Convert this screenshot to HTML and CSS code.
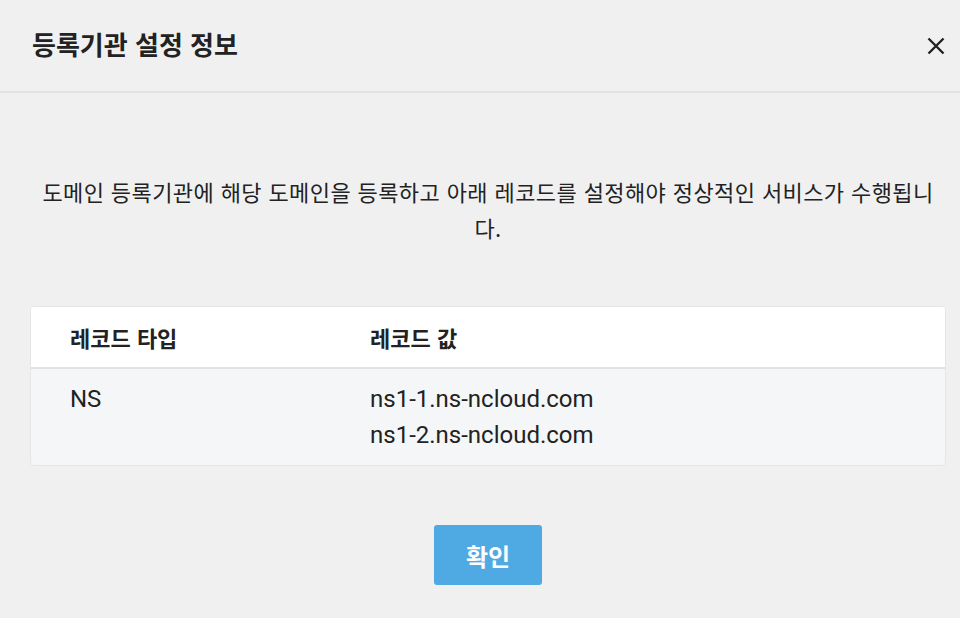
FILE: index.html
```html
<!DOCTYPE html>
<html lang="ko">
<head>
<meta charset="utf-8">
<link rel="stylesheet" href="styles.css">
</head>
<body>
<div class="modal">
  <header class="modal-header">
    <h1 class="modal-title">등록기관 설정 정보</h1>
    <button class="close" aria-label="닫기">
      <svg width="18" height="18" viewBox="0 0 18 18"><path d="M1.5 1.5 L16.5 16.5 M16.5 1.5 L1.5 16.5" stroke="#222" stroke-width="2.4" fill="none"/></svg>
    </button>
  </header>
  <main class="modal-body">
    <p class="desc">도메인 등록기관에 해당 도메인을 등록하고 아래 레코드를 설정해야 정상적인 서비스가 수행됩니다.</p>
    <div class="table">
      <div class="row head">
        <div class="col type">레코드 타입</div>
        <div class="col value">레코드 값</div>
      </div>
      <div class="row data">
        <div class="col type">NS</div>
        <div class="col value">ns1-1.ns-ncloud.com<br>ns1-2.ns-ncloud.com</div>
      </div>
    </div>
    <div class="actions">
      <button class="confirm">확인</button>
    </div>
  </main>
</div>
</body>
</html>
```

FILE: styles.css
```css
html, body {
  margin: 0;
  padding: 0;
  background: #f0f0f0;
}
body {
  font-family: Roboto, "Noto Sans CJK KR", sans-serif;
  color: #222;
}
.modal {
  width: 960px;
  height: 618px;
  overflow: hidden;
}
.modal-header {
  height: 93px;
  border-bottom: 2px solid #e2e2e2;
  display: flex;
  align-items: center;
  justify-content: space-between;
  padding: 0 12px 0 32px;
  box-sizing: border-box;
}
.modal-title {
  margin: 0;
  font-family: "Noto Sans CJK KR", sans-serif;
  font-size: 26px;
  font-weight: 700;
  letter-spacing: 0;
  color: #222;
  position: relative;
  top: -2px;
}
.close {
  border: 0;
  background: none;
  padding: 0;
  width: 24px;
  height: 24px;
  display: flex;
  align-items: center;
  justify-content: center;
  cursor: pointer;
}
.modal-body {
  padding: 0 14px 0 30px;
}
.desc {
  margin: 80px 0 0;
  font-family: "Noto Sans CJK KR", sans-serif;
  font-size: 22px;
  line-height: 36px;
  letter-spacing: 0.4px;
  text-align: center;
  color: #222;
  padding: 0 12px;
}
.table {
  margin-top: 61px;
  background: #f5f6f8;
  border: 1px solid #e5e5e5;
  border-radius: 4px;
  overflow: hidden;
}
.row {
  display: flex;
}
.row.head {
  background: #fff;
  height: 60px;
  align-items: center;
  border-bottom: 2px solid #e2e2e2;
  font-family: "Noto Sans CJK KR", sans-serif;
  font-weight: 700;
  font-size: 22px;
}
.row.data {
  padding: 12px 0;
  font-size: 24px;
  line-height: 36px;
}
.col.type {
  width: 339px;
  padding-left: 39px;
  box-sizing: border-box;
}
.actions {
  display: flex;
  justify-content: center;
  margin-top: 59px;
}
.confirm {
  width: 108px;
  height: 60px;
  border: 0;
  border-radius: 3px;
  background: #4faae3;
  color: #fff;
  font-family: "Noto Sans CJK KR", sans-serif;
  font-size: 24px;
  font-weight: 700;
  cursor: pointer;
}
```
